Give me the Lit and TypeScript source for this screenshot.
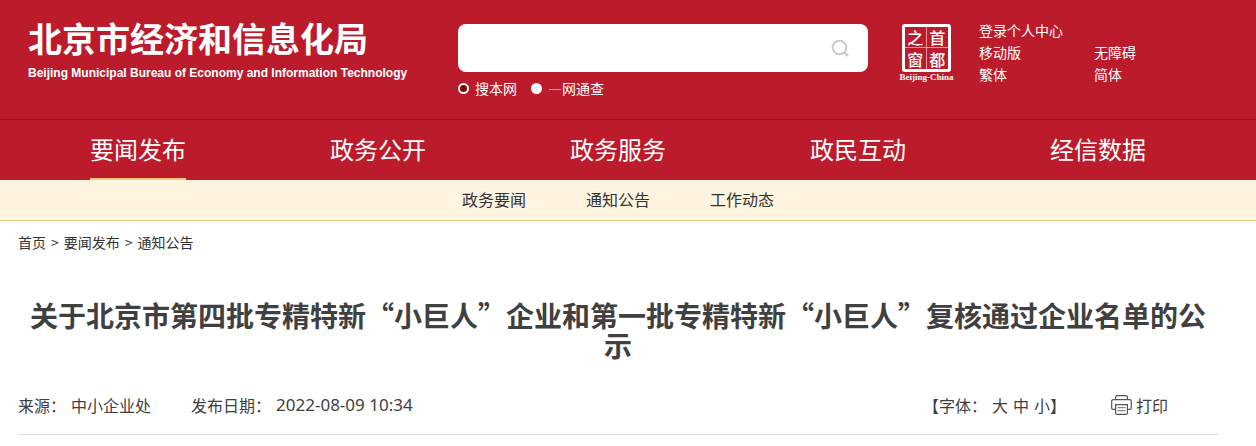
import { LitElement, html, css } from "lit";
import { customElement, state } from "lit/decorators.js";

@customElement("app-root")
export class AppRoot extends LitElement {
  static styles = css`
    :host {
      display: block;
      color: #333;
      background: #fff;
      font-family: "Noto Sans CJK SC", sans-serif;
      font-size: 14px;
      line-height: 22px;
    }
    * {
      box-sizing: border-box;
    }
    a {
      color: inherit;
      text-decoration: none;
    }
    ul {
      list-style: none;
      margin: 0;
      padding: 0;
    }
    button {
      font: inherit;
      color: inherit;
      background: none;
      border: 0;
      padding: 0;
      cursor: pointer;
    }
    .wrap {
      max-width: 1256px;
      margin: 0 auto;
      padding: 0 38px 0 18px;
    }
    .header {
      background: #bc1b2c;
      color: #fff;
    }
    .top {
      display: flex;
      align-items: flex-start;
      padding-top: 19px;
      padding-left: 28px;
      min-height: 119px;
    }
    .brand {
      flex: 0 0 430px;
    }
    .name {
      margin: 0;
      font-size: 34px;
      line-height: 38px;
      font-weight: 700;
    }
    .english {
      margin: 0;
      padding-top: 4px;
      font: 700 12px/24px "Liberation Sans", Arial, sans-serif;
    }
    .search {
      flex: 0 1 410px;
      padding-top: 5px;
    }
    .box {
      display: flex;
      align-items: center;
      height: 48px;
      padding: 0 18px;
      border-radius: 8px;
      background: #fff;
    }
    .query {
      flex: 1;
      min-width: 0;
      height: 32px;
      border: 0;
      outline: 0;
      font: inherit;
      background: none;
    }
    .go {
      display: flex;
    }
    .scopes {
      display: flex;
      gap: 14px;
      padding-top: 5px;
    }
    .scope {
      display: flex;
      align-items: center;
      gap: 6px;
    }
    .radio {
      appearance: none;
      width: 11px;
      height: 11px;
      margin: 0;
      border: 2px solid #fff;
      border-radius: 50%;
      background: #fff;
    }
    .radio:checked {
      background: #8b0000;
    }
    .seal {
      flex: none;
      margin: 5px 0 0 31px;
      width: 55px;
      display: flex;
      flex-direction: column;
      align-items: center;
    }
    .stamp {
      display: grid;
      grid-template-columns: 1fr 1fr;
      grid-template-rows: 1fr 1fr;
      width: 49px;
      height: 48px;
      border: 3px solid #fff;
      border-radius: 3px;
    }
    .glyph {
      display: flex;
      align-items: center;
      justify-content: center;
      font-size: 16px;
      line-height: 18px;
      font-weight: 500;
    }
    .glyph:nth-child(odd) {
      border-right: 1px solid #e39aa2;
    }
    .glyph:nth-child(-n + 2) {
      border-bottom: 1px solid #e39aa2;
    }
    .sealname {
      font: 700 9px/10px "Liberation Serif", serif;
      white-space: nowrap;
    }
    .tools {
      display: grid;
      grid-template-columns: 115px auto;
      margin-left: 25px;
      white-space: nowrap;
    }
    .wide {
      grid-column: 1 / -1;
    }
    .nav {
      border-top: 1px solid #9a0f1f;
    }
    .menu {
      display: flex;
      font-size: 24px;
    }
    .item {
      flex: 1;
      display: flex;
      justify-content: center;
    }
    .link {
      height: 60px;
      line-height: 58px;
    }
    .link.current {
      border-bottom: 2px solid #f3c878;
    }
    .sub {
      background: #fef4df;
      border-bottom: 1px solid #f8cd8a;
    }
    .submenu {
      display: flex;
      justify-content: center;
      gap: 60px;
      height: 40px;
      font-size: 16px;
      line-height: 38px;
    }
    .crumbs {
      display: flex;
      gap: 5px;
      padding-top: 10px;
    }
    .title {
      margin: 47px 0 0;
      color: #404040;
      font-size: 28px;
      line-height: 30px;
      font-weight: 700;
      text-align: center;
    }
    .meta {
      display: flex;
      align-items: center;
      margin-top: 16px;
      padding: 16px 50px 16px 0;
      border-bottom: 1px solid #ddd;
      color: #404040;
      font-size: 16px;
      line-height: 26px;
      white-space: nowrap;
    }
    .field {
      display: flex;
      gap: 5px;
      margin-right: 40px;
    }
    .date {
      font-family: "Noto Sans", sans-serif;
      font-size: 17px;
    }
    .sizes {
      display: flex;
      gap: 5px;
      margin-left: auto;
    }
    .print {
      display: flex;
      align-items: center;
      gap: 4px;
      margin-left: 45px;
    }
  `;

  @state() private current = "要闻发布";

  private sections = ["要闻发布", "政务公开", "政务服务", "政民互动", "经信数据"];
  private topics = ["政务要闻", "通知公告", "工作动态"];

  render() {
    return html`
      <header class="header" lang="zh-CN">
        <div class="wrap top">
          <div class="brand">
            <p class="name">北京市经济和信息化局</p>
            <p class="english">Beijing Municipal Bureau of Economy and Information Technology</p>
          </div>
          <form class="search" @submit=${(e: Event) => e.preventDefault()}>
            <div class="box">
              <input class="query" type="text" aria-label="搜索" />
              <button class="go" aria-label="搜索">
                <svg width="20" height="20" viewBox="0 0 20 20" fill="none" stroke="#ccc" stroke-width="2">
                  <circle cx="9.5" cy="9.5" r="6.8" />
                  <path d="M14 14l4 4" stroke-width="2.4" />
                </svg>
              </button>
            </div>
            <div class="scopes">
              <label class="scope"><input class="radio" type="radio" name="scope" checked />搜本网</label>
              <label class="scope"><input class="radio" type="radio" name="scope" />—网通查</label>
            </div>
          </form>
          <a class="seal" href="#">
            <span class="stamp">
              <span class="glyph">之</span><span class="glyph">首</span>
              <span class="glyph">窗</span><span class="glyph">都</span>
            </span>
            <span class="sealname">Beijing-China</span>
          </a>
          <div class="tools">
            <a class="wide" href="#">登录个人中心</a>
            <a href="#">移动版</a><a href="#">无障碍</a>
            <a href="#">繁体</a><a href="#">简体</a>
          </div>
        </div>
        <nav class="nav">
          <ul class="wrap menu">
            ${this.sections.map(
              (s) => html`<li class="item">
                <a class="link ${s === this.current ? "current" : ""}" href="#" @click=${() => (this.current = s)}>${s}</a>
              </li>`
            )}
          </ul>
        </nav>
      </header>
      <nav class="sub" lang="zh-CN">
        <ul class="wrap submenu">
          ${this.topics.map((t) => html`<li><a href="#">${t}</a></li>`)}
        </ul>
      </nav>
      <main class="wrap" lang="zh-CN">
        <nav class="crumbs">
          <a href="#">首页</a><span>&gt;</span><a href="#">要闻发布</a><span>&gt;</span><a href="#">通知公告</a>
        </nav>
        <h1 class="title">关于北京市第四批专精特新“小巨人”企业和第一批专精特新“小巨人”复核通过企业名单的公示</h1>
        <div class="meta">
          <span class="field"><span>来源：</span><span>中小企业处</span></span>
          <span class="field"><span>发布日期：</span><time class="date">2022-08-09 10:34</time></span>
          <span class="sizes">
            <span>【字体：</span><button>大</button><button>中</button><span><button>小</button>】</span>
          </span>
          <button class="print">
            <svg width="21" height="20" viewBox="0 0 21 20" fill="none" stroke="#555" stroke-width="1.2">
              <path d="M4.6 4.5V2Q4.6.6 6 .6h9q1.4 0 1.4 1.4v2.5" />
              <path d="M4.5 14.4H2.2Q.7 14.4.7 12.9V6.2q0-1.6 1.6-1.6h16.4q1.6 0 1.6 1.6v6.7q0 1.5-1.5 1.5h-2.3" />
              <path d="M4.6 9.6h11.8v8.3q0 1.5-1.5 1.5H6.1q-1.5 0-1.5-1.5z" />
              <path d="M6.5 12.6h8M6.5 15.6h8" stroke="#888" />
            </svg>
            打印
          </button>
        </div>
      </main>
    `;
  }
}
